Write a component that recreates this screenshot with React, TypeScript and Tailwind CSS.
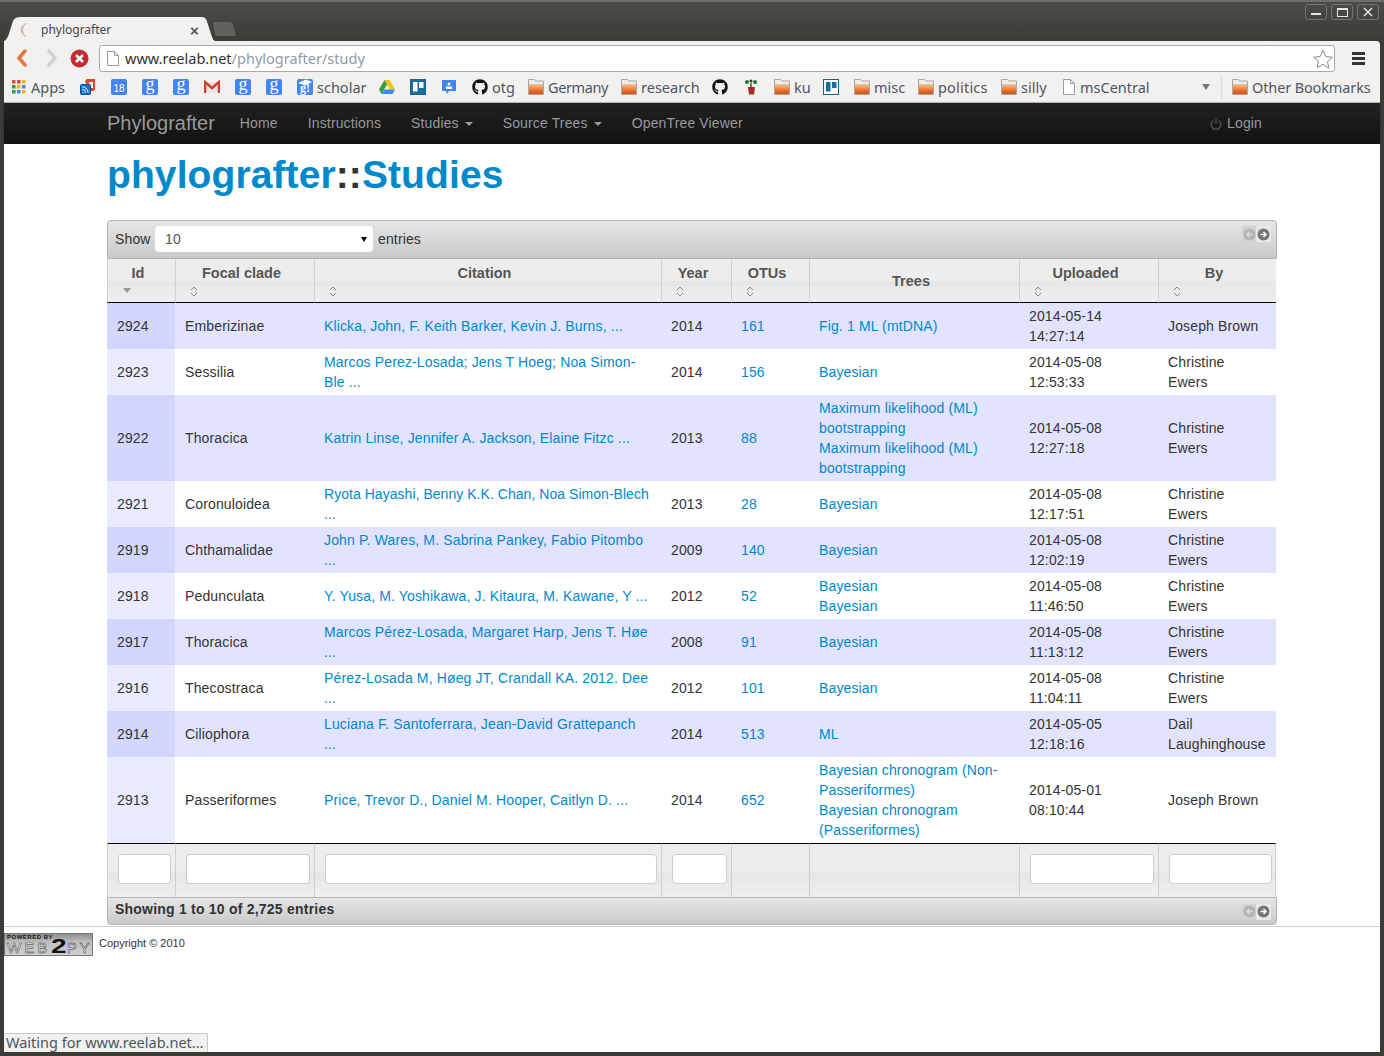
import React from 'react';
import { FaGithub } from 'react-icons/fa';

type Row = {
  id: number;
  clade: string;
  citation: string;
  tight?: boolean;
  year: number;
  otus: number;
  trees: string[];
  date: string;
  time: string;
  by: string;
};

const rows: Row[] = [
  { id: 2924, clade: 'Emberizinae', citation: 'Klicka, John, F. Keith Barker, Kevin J. Burns, ...', year: 2014, otus: 161, trees: ['Fig. 1 ML (mtDNA)'], date: '2014-05-14', time: '14:27:14', by: 'Joseph Brown' },
  { id: 2923, clade: 'Sessilia', citation: 'Marcos Perez-Losada; Jens T Hoeg; Noa Simon-Ble ...', year: 2014, otus: 156, trees: ['Bayesian'], date: '2014-05-08', time: '12:53:33', by: 'Christine Ewers' },
  { id: 2922, clade: 'Thoracica', citation: 'Katrin Linse, Jennifer A. Jackson, Elaine Fitzc ...', year: 2013, otus: 88, trees: ['Maximum likelihood (ML) bootstrapping', 'Maximum likelihood (ML) bootstrapping'], date: '2014-05-08', time: '12:27:18', by: 'Christine Ewers' },
  { id: 2921, clade: 'Coronuloidea', citation: 'Ryota Hayashi, Benny K.K. Chan, Noa Simon-Blech ...', tight: true, year: 2013, otus: 28, trees: ['Bayesian'], date: '2014-05-08', time: '12:17:51', by: 'Christine Ewers' },
  { id: 2919, clade: 'Chthamalidae', citation: 'John P. Wares, M. Sabrina Pankey, Fabio Pitombo ...', year: 2009, otus: 140, trees: ['Bayesian'], date: '2014-05-08', time: '12:02:19', by: 'Christine Ewers' },
  { id: 2918, clade: 'Pedunculata', citation: 'Y. Yusa, M. Yoshikawa, J. Kitaura, M. Kawane, Y ...', year: 2012, otus: 52, trees: ['Bayesian', 'Bayesian'], date: '2014-05-08', time: '11:46:50', by: 'Christine Ewers' },
  { id: 2917, clade: 'Thoracica', citation: 'Marcos Pérez-Losada, Margaret Harp, Jens T. Høe ...', year: 2008, otus: 91, trees: ['Bayesian'], date: '2014-05-08', time: '11:13:12', by: 'Christine Ewers' },
  { id: 2916, clade: 'Thecostraca', citation: 'Pérez-Losada M, Høeg JT, Crandall KA. 2012. Dee ...', year: 2012, otus: 101, trees: ['Bayesian'], date: '2014-05-08', time: '11:04:11', by: 'Christine Ewers' },
  { id: 2914, clade: 'Ciliophora', citation: 'Luciana F. Santoferrara, Jean-David Grattepanch ...', year: 2014, otus: 513, trees: ['ML'], date: '2014-05-05', time: '12:18:16', by: 'Dail Laughinghouse' },
  { id: 2913, clade: 'Passeriformes', citation: 'Price, Trevor D., Daniel M. Hooper, Caitlyn D. ...', year: 2014, otus: 652, trees: ['Bayesian chronogram (Non-Passeriformes)', 'Bayesian chronogram (Passeriformes)'], date: '2014-05-01', time: '08:10:44', by: 'Joseph Brown' },
];

const Folder = () => (
  <svg width="16" height="16" viewBox="0 0 16 16" className="shrink-0">
    <defs>
      <linearGradient id="folderFill" x1="0" y1="0" x2="0" y2="1">
        <stop offset="0" stopColor="#f6c6a0" />
        <stop offset="0.6" stopColor="#e8772f" />
        <stop offset="1" stopColor="#cf4f18" />
      </linearGradient>
    </defs>
    <path d="M0.500 0.500h6l1.500 1.500h7.500v13.500h-15z" fill="#eeece8" stroke="#aaa7a1" />
    <rect x="1" y="5" width="14" height="10" fill="url(#folderFill)" />
  </svg>
);

const Doc = () => (
  <svg width="16" height="16" viewBox="0 0 16 16" className="shrink-0">
    <path d="M2.500 0.500h7l4 4v11h-11z M9.500 0.500v4h4" fill="#fff" stroke="#9a9a9a" />
  </svg>
);

const G = () => (
  <span className="w-4 h-4 shrink-0 rounded-[2px] bg-[#4285f4] text-white text-[18px] leading-[11px] text-center tracking-normal font-['Liberation_Serif',serif]">g</span>
);

const Trello = ({ light }: { light?: boolean }) => (
  <svg width="16" height="16" viewBox="0 0 16 16" className="shrink-0">
    <rect x="0.500" y="0.500" width="15" height="15" fill={light ? '#fff' : '#1b6f9e'} stroke="#1b5f86" />
    <rect x="3" y="3" width="4.500" height="9.500" fill={light ? '#1b6f9e' : '#fff'} />
    <rect x="9" y="3" width="4.500" height="6" fill={light ? '#1b6f9e' : '#fff'} />
  </svg>
);

const SortIcon = () => (
  <svg width="8" height="11" viewBox="0 0 8 11" className="block">
    <path d="M1 4l3-3 3 3M1 7l3 3 3-3" fill="none" stroke="#888" strokeWidth="1" />
  </svg>
);

const Paginate = () => (
  <div className="flex h-[16px]">
    <span className="w-[14px] flex items-center justify-center bg-[#d2d2d2]">
      <svg width="13" height="13" viewBox="0 0 13 13"><circle cx="6.500" cy="6.500" r="6" fill="#b4b4b4" /><path d="M9.500 6.500h-5M6.500 4l-2.500 2.500 2.500 2.500" fill="none" stroke="#dcdcdc" strokeWidth="1.500" /></svg>
    </span>
    <span className="w-[15px] flex items-center justify-center bg-[#e9e9e9]">
      <svg width="13" height="13" viewBox="0 0 13 13"><circle cx="6.500" cy="6.500" r="6" fill="#767676" /><path d="M3.500 6.500h5M6.500 4l2.500 2.500-2.500 2.500" fill="none" stroke="#fff" strokeWidth="1.500" /></svg>
    </span>
  </div>
);

const Caret = () => <span className="inline-block ml-[6px] align-middle w-0 h-0 border-x-4 border-x-transparent border-t-4 border-t-[#999]" />;

const App: React.FC = () => {
  const thClass = 'border-l border-b border-l-[#d0d0d0] border-b-black pl-[10px] pr-[17px] pt-[4px] pb-0 align-top tracking-normal bg-[linear-gradient(#ededed_0%,#ededed_50%,#e6e6e6_51%,#efefef_100%)]';
  const footClass = 'border-l border-t border-l-[#d0d0d0] border-t-black pl-[10px] pr-[4px] pt-[10px] h-[54px] align-top bg-[linear-gradient(#ededed_0%,#ededed_50%,#e6e6e6_55%,#efefef_100%)]';
  const linkClass = 'text-[#0088cc]';

  return (
    <div className="relative w-[1384px] h-[1056px] overflow-hidden flex flex-col bg-[#3c3b37] px-[4px] pb-[4px] font-['Liberation_Sans',Arial,sans-serif] text-[14px] leading-5 tracking-[0.14px] text-[#333]">
      {/* window title strip with tabs */}
      <div className="relative h-[41px] -mx-[4px] shrink-0 border-t-2 border-t-[#6e6d69] bg-[linear-gradient(#4c4b47,#3c3b37)] flex items-start">
        <div className="relative mt-[15px] ml-[4px] w-[211px] h-[24px] flex items-center">
          <svg width="211" height="24" viewBox="0 0 211 24" className="absolute inset-0">
            <path d="M0 24C6 22 7 4 11 1.500Q12.500 0 16 0H198Q201 0 202.500 3L208 20Q209 23 211 24Z" fill="#f2f1f0" />
          </svg>
          <svg width="10" height="14" viewBox="0 0 10 14" className="relative ml-[15px] mt-[2px]">
            <path d="M7 0.500C2.500 3 2.500 11 7 13.500C0.500 11 0.500 3 7 0.500Z" fill="#cdb8ad" stroke="#cdb8ad" />
          </svg>
          <span className="relative ml-[12px] mt-[2px] text-[12px] tracking-normal text-[#444] font-['Noto_Sans',sans-serif]">phylografter</span>
          <span className="absolute left-[186px] top-[4px] text-[15px] font-bold text-[#555]">×</span>
        </div>
        <svg width="25" height="15" viewBox="0 0 25 15" className="mt-[20px] -ml-[3px]">
          <path d="M1 0H17Q20 0 21 3L24 14H5Q3 14 3 12Z" fill="#63625e" />
        </svg>
        <div className="ml-auto mr-[5px] mt-[2px] flex gap-[4px] text-[#e0e0e0]">
          <div className="w-[22px] h-[16px] border border-[#77766f] rounded-[3px] flex items-center justify-center">
            <span className="block w-[10px] h-[2px] mt-[3px] bg-[#e6e6e6]" />
          </div>
          <div className="w-[22px] h-[16px] border border-[#77766f] rounded-[3px] flex items-center justify-center">
            <span className="block w-[11px] h-[9px] border border-[#e6e6e6] border-t-2" />
          </div>
          <div className="w-[22px] h-[16px] border border-[#77766f] rounded-[3px] flex items-center justify-center">
            <svg width="10" height="10" viewBox="0 0 10 10"><path d="M1 1l8 8M9 1l-8 8" stroke="#e6e6e6" strokeWidth="1.500" /></svg>
          </div>
        </div>
      </div>

      {/* address bar */}
      <div className="h-[31px] shrink-0 flex items-start bg-[#f2f1f0] rounded-tr-[4px] tracking-normal font-['Noto_Sans',sans-serif]">
        <svg width="14" height="18" viewBox="0 0 14 18" className="mt-[8px] ml-[11px]">
          <path d="M10 2L4 9l6 7" fill="none" stroke="#e07b3f" strokeWidth="3.500" strokeLinecap="round" strokeLinejoin="round" />
        </svg>
        <svg width="14" height="18" viewBox="0 0 14 18" className="mt-[8px] ml-[16px]">
          <path d="M4 2l6 7-6 7" fill="none" stroke="#d2d2d0" strokeWidth="3.500" strokeLinecap="round" strokeLinejoin="round" />
        </svg>
        <svg width="19" height="19" viewBox="0 0 19 19" className="mt-[8px] ml-[11px]">
          <circle cx="9.500" cy="9.500" r="9" fill="#c32a30" />
          <path d="M6 6l7 7M13 6l-7 7" stroke="#fff" strokeWidth="2.500" />
        </svg>
        <div className="ml-[10px] mt-[4px] w-[1236px] h-[27px] flex items-center bg-white border border-[#aaa] rounded-[3px]">
          <svg width="12" height="15" viewBox="0 0 12 15" className="ml-[7px]">
            <path d="M0.500 0.500h7l4 4v10h-11z M7.500 0.500v4h4" fill="#fff" stroke="#999" />
          </svg>
          <span className="ml-[6px] -mt-[2px] text-[14.500px] text-[#333]">www.reelab.net<span className="text-[#929aa5]">/phylografter/study</span></span>
          <svg width="22" height="20" viewBox="0 0 22 20" className="ml-auto">
            <path d="M11 1.500l2.800 6 6.500.8-4.800 4.400 1.300 6.400L11 15.400l-5.800 3.200 1.300-6.400L1.700 8.300l6.500-.8z" fill="#fff" stroke="#888" strokeWidth="1" />
          </svg>
        </div>
        <div className="ml-[17px] mt-[11px] w-[13px] flex flex-col gap-[2px]">
          <span className="h-[3px] bg-[#333]" />
          <span className="h-[3px] bg-[#333]" />
          <span className="h-[3px] bg-[#333]" />
        </div>
      </div>

      {/* bookmarks bar */}
      <div className="h-[31px] shrink-0 flex items-center gap-[15px] pl-[8px] bg-[#f2f1f0] border-b border-[#bdbbb8] text-[14.500px] tracking-normal whitespace-nowrap text-[#4d5561] font-['Noto_Sans',sans-serif]">
        <div className="flex items-center gap-[5px]">
          <svg width="14" height="14" viewBox="0 0 14 14" className="shrink-0">
            <rect x="0" y="0" width="3.500" height="3.500" fill="#e04a3a" /><rect x="5" y="0" width="3.500" height="3.500" fill="#e04a3a" /><rect x="10" y="0" width="3.500" height="3.500" fill="#f4b400" />
            <rect x="0" y="5" width="3.500" height="3.500" fill="#2f9e44" /><rect x="5" y="5" width="3.500" height="3.500" fill="#f4b400" /><rect x="10" y="5" width="3.500" height="3.500" fill="#4285f4" />
            <rect x="0" y="10" width="3.500" height="3.500" fill="#2f9e44" /><rect x="5" y="10" width="3.500" height="3.500" fill="#4285f4" /><rect x="10" y="10" width="3.500" height="3.500" fill="#f4b400" />
          </svg>
          <span className="w-[34px]">Apps</span>
        </div>
        <svg width="16" height="16" viewBox="0 0 16 16" className="shrink-0">
          <path d="M5 2a3 3 0 0 1 3-2h7v10a2 2 0 0 1-2 2H9z" fill="#d9482f" />
          <path d="M9 3h4v6H9z" fill="#f6f6f6" />
          <rect x="0.500" y="5.500" width="10" height="10" rx="1" fill="#1a73c9" stroke="#0d4f94" />
          <path d="M2.500 13.500h1M2.500 10.500a3 3 0 0 1 3 3M2.500 8a5.500 5.500 0 0 1 5.500 5.500" fill="none" stroke="#fff" />
        </svg>
        <span className="w-4 h-4 shrink-0 rounded-[2px] bg-[#4285f4] text-white text-[10px] leading-4 pt-[2px] text-center font-['Liberation_Sans',sans-serif]">18</span>
        <G />
        <G />
        <svg width="16" height="16" viewBox="0 0 16 16" className="shrink-0">
          <rect x="1" y="3" width="14" height="11" fill="#e8e6e2" />
          <path d="M1 14V3l7 6 7-6v11" fill="none" stroke="#d2402f" strokeWidth="2.500" />
        </svg>
        <G />
        <G />
        <div className="flex items-center gap-[4px]">
          <span className="relative w-4 h-4 shrink-0 rounded-[2px] bg-[#4285f4] text-white text-[12px] leading-[19px] text-center font-bold font-['Liberation_Serif',serif]">
            g!
            <svg width="16" height="7" viewBox="0 0 16 7" className="absolute left-0 top-0">
              <path d="M1 4L9 0.500 15 3 8 6.500z" fill="#fff" />
            </svg>
          </span>
          <span className="w-[47px]">scholar</span>
        </div>
        <svg width="16" height="16" viewBox="0 0 16 16" className="shrink-0">
          <path d="M5.500 1h5L16 10.500h-5z" fill="#f4c20d" />
          <path d="M5.500 1L0 10.500 2.500 15 8 5.500z" fill="#2f9e44" />
          <path d="M2.500 15h11L16 10.500H5z" fill="#4285f4" />
        </svg>
        <Trello />
        <svg width="16" height="16" viewBox="0 0 16 16" className="shrink-0">
          <path d="M1 1h14v11H8l-2 3-1-3H1z" fill="#4285f4" />
          <circle cx="8" cy="5" r="1.500" fill="#fff" />
          <rect x="5" y="7.500" width="6" height="2.500" fill="#fff" />
        </svg>
        <div className="flex items-center gap-[4px]">
          <FaGithub size={16} color="#111" className="shrink-0" />
          <span className="w-[21px]">otg</span>
        </div>
        <div className="flex items-center gap-[4px]"><Folder /><span className="w-[58px] tracking-[-0.4px]">Germany</span></div>
        <div className="flex items-center gap-[4px]"><Folder /><span className="w-[56px]">research</span></div>
        <FaGithub size={16} color="#111" className="shrink-0" />
        <svg width="16" height="16" viewBox="0 0 16 16" className="shrink-0">
          <path d="M5 8h7l-1 7.500H6z" fill="#a32a1c" />
          <path d="M8 8V4" stroke="#2f6b2f" strokeWidth="1.500" />
          <circle cx="4" cy="3" r="2" fill="#1f7a3a" /><circle cx="12" cy="3" r="2" fill="#1f7a3a" /><circle cx="8" cy="2" r="1.500" fill="#333" />
        </svg>
        <div className="flex items-center gap-[4px]"><Folder /><span className="w-[14px]">ku</span></div>
        <Trello light />
        <div className="flex items-center gap-[4px]"><Folder /><span className="w-[29px]">misc</span></div>
        <div className="flex items-center gap-[4px]"><Folder /><span className="w-[48px] tracking-[0.2px]">politics</span></div>
        <div className="flex items-center gap-[4px]"><Folder /><span className="w-[25px]">silly</span></div>
        <div className="flex items-center gap-[4px]"><Doc /><span className="w-[69px] -ml-px">msCentral</span></div>
        <span className="ml-[38px] w-0 h-0 border-x-4 border-x-transparent border-t-[6px] border-t-[#777]" />
        <div className="-ml-[4px] flex items-center gap-[4px] pl-[10px] border-l border-[#dcdad7] h-[24px]"><Folder /><span className="tracking-[-0.13px]">Other Bookmarks</span></div>
      </div>

      {/* site navbar */}
      <nav className="h-[41px] shrink-0 bg-[linear-gradient(#222222,#111111)] shadow-[0_1px_3px_rgba(0,0,0,0.2)]">
        <div className="w-[1170px] mx-auto h-full flex items-center -mt-px">
          <span className="text-[20px] tracking-normal text-[#999] mr-[25px]">Phylografter</span>
          <div className="flex gap-[30px] text-[#999]">
            <span>Home</span>
            <span>Instructions</span>
            <span>Studies<Caret /></span>
            <span>Source Trees<Caret /></span>
            <span>OpenTree Viewer</span>
          </div>
          <div className="ml-auto mr-[15px] flex items-center gap-[5px] text-[#999]">
            <svg width="12" height="12" viewBox="0 0 12 12" className="mt-[2px]">
              <path d="M3.500 2.500a4.800 4.800 0 1 0 5 0M6 0.500v5" fill="none" stroke="#555" strokeWidth="1.300" />
            </svg>
            <span>Login</span>
          </div>
        </div>
      </nav>

      {/* page */}
      <main className="flex-1 bg-white flex flex-col">
        <div className="w-[1170px] mx-auto">
          <h1 className="pt-[7px] pb-[21px] text-[39px] leading-[48px] tracking-[0.1px] font-bold text-[#0088cc]">
            phylografter<span className="text-[#333]">::</span>Studies
          </h1>

          {/* top toolbar */}
          <div className="h-[39px] flex items-center justify-between pl-[7px] pr-[5px] pb-[1px] border border-[#b5b5b5] rounded-t-[4px] bg-[linear-gradient(#e6e6e6,#c9c9c9)]">
            <div className="flex items-center">
              <span className="w-[35px] -mt-px">Show</span>
              <div className="ml-[5px] w-[218px] h-[26px] flex items-center justify-between pl-[10px] pr-[6px] bg-white rounded-[4px] text-[#555]">
                <span>10</span>
                <span className="w-0 h-0 border-x-[3px] border-x-transparent border-t-[5px] border-t-black" />
              </div>
              <span className="ml-[5px] -mt-px">entries</span>
            </div>
            <div className="self-start mt-[5px]"><Paginate /></div>
          </div>

          <table className="w-[1169px] table-fixed border-separate border-spacing-0">
            <colgroup>
              <col className="w-[68px]" />
              <col className="w-[139px]" />
              <col className="w-[347px]" />
              <col className="w-[70px]" />
              <col className="w-[78px]" />
              <col className="w-[210px]" />
              <col className="w-[139px]" />
              <col className="w-[118px]" />
            </colgroup>
            <thead>
              <tr className="h-[44px] text-[#555] text-[14.500px] text-center">
                <th className={thClass}>
                  <div>Id</div>
                  <span className="block w-0 h-0 mt-[5px] ml-[5px] border-x-4 border-x-transparent border-t-[5px] border-t-[#999]" />
                </th>
                {['Focal clade', 'Citation', 'Year', 'OTUs'].map((label) => (
                  <th key={label} className={thClass}>
                    <div>{label}</div>
                    <div className="mt-[3px] ml-[4px]"><SortIcon /></div>
                  </th>
                ))}
                <th className={thClass + ' !align-middle !pt-0'}>Trees</th>
                {['Uploaded', 'By'].map((label) => (
                  <th key={label} className={thClass}>
                    <div>{label}</div>
                    <div className="mt-[3px] ml-[4px]"><SortIcon /></div>
                  </th>
                ))}
              </tr>
            </thead>
            <tbody>
              {rows.map((row, i) => (
                <tr key={row.id} className={i % 2 === 0 ? 'bg-[#e2e4ff]' : 'bg-white'}>
                  <td className={`px-[10px] py-[3px] ${i % 2 === 0 ? 'bg-[#d3d6ff]' : 'bg-[#eaebff]'}`}>{row.id}</td>
                  <td className="px-[10px] py-[3px]">{row.clade}</td>
                  <td className="px-[10px] py-[3px]"><span className={row.tight ? 'text-[#0088cc] tracking-[0.04px]' : linkClass}>{row.citation}</span></td>
                  <td className="px-[10px] py-[3px]">{row.year}</td>
                  <td className="px-[10px] py-[3px]"><span className={linkClass}>{row.otus}</span></td>
                  <td className="px-[10px] py-[3px]">
                    {row.trees.map((tree, j) => (
                      <div key={j} className={linkClass}>{tree}</div>
                    ))}
                  </td>
                  <td className="px-[10px] py-[3px]">{row.date}<br />{row.time}</td>
                  <td className="px-[10px] py-[3px]">{row.by}</td>
                </tr>
              ))}
            </tbody>
            <tfoot>
              <tr>
                {[true, true, true, true, false, false, true, true].map((hasInput, i) => (
                  <td key={i} className={footClass + (i === 7 ? ' border-r border-r-[#d0d0d0] !pr-[3px]' : '')}>
                    {hasInput && <input className="block w-full h-[30px] bg-white border border-[#ccc] rounded-[4px]" />}
                  </td>
                ))}
              </tr>
            </tfoot>
          </table>

          {/* bottom toolbar */}
          <div className="h-[28px] flex items-center justify-between pl-[7px] pr-[5px] border border-[#b5b5b5] rounded-b-[4px] font-bold tracking-[0.22px] bg-[linear-gradient(#e6e6e6,#c9c9c9)]">
            <span className="-mt-[4px]">Showing 1 to 10 of 2,725 entries</span>
            <div className="mt-[1px]"><Paginate /></div>
          </div>
        </div>

        <footer className="mt-[1px] pt-[6px] border-t border-[#ccc] flex items-start tracking-normal">
          <div className="relative w-[89px] h-[23px] overflow-hidden border border-[#777] bg-[linear-gradient(#8f8f8f,#c0c0c0_40%,#cfcfcf)]">
            <span className="absolute left-[2px] top-0 text-[6px] leading-[7px] tracking-[0.5px] font-bold text-[#111] whitespace-nowrap">POWERED BY</span>
            <span className="absolute left-[2px] top-[6px] text-[15px] leading-[15px] tracking-[3px] text-[#fafafa] whitespace-nowrap [-webkit-text-stroke:0.5px_#333]">WEB</span>
            <span className="absolute left-[46px] top-[3px] text-[20px] leading-[18px] font-bold text-[#111] origin-left scale-x-[1.4]">2</span>
            <span className="absolute left-[62px] top-[6px] text-[15px] leading-[15px] tracking-[2.5px] text-[#fafafa] whitespace-nowrap [-webkit-text-stroke:0.5px_#333]">PY</span>
          </div>
          <span className="ml-[6px] mt-[1px] text-[11px] leading-[18px]">Copyright © 2010</span>
        </footer>
      </main>

      {/* loading status bubble */}
      <div className="absolute left-[4px] bottom-[4px] w-[204px] h-[19px] pl-[2px] bg-[#f2f1f0] border-t border-r border-[#c8c8c8] rounded-tr-[2px] text-[14.500px] leading-[16px] tracking-normal text-[#4d5561] font-['Noto_Sans',sans-serif]">
        Waiting for www.reelab.net...
      </div>
    </div>
  );
};

export default App;
